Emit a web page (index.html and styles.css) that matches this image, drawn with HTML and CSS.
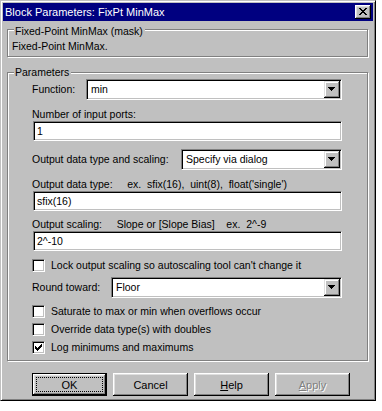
FILE: index.html
```html
<!DOCTYPE html>
<html lang="en">
<head>
    <meta charset="UTF-8">
    <title>Block Parameters: FixPt MinMax</title>
    <link rel="stylesheet" href="styles.css">
</head>
<body>
    <div class="window">
        <div class="titlebar">
            <span class="title">Block Parameters: FixPt MinMax</span>
            <span class="close-btn">
                <svg width="8" height="7" viewBox="0 0 8 7" shape-rendering="crispEdges">
                    <path fill="#000" d="M0 0h2v1h-2zM6 0h2v1h-2zM1 1h2v1h-2zM5 1h2v1h-2zM2 2h4v1h-4zM3 3h2v1h-2zM2 4h4v1h-4zM1 5h2v1h-2zM5 5h2v1h-2zM0 6h2v1h-2zM6 6h2v1h-2z"/>
                </svg>
            </span>
        </div>

        <div class="client">
            <div class="group group-mask">
                <div class="legend">Fixed-Point MinMax (mask)</div>
                <div class="desc">Fixed-Point MinMax.</div>
            </div>

            <div class="group group-params">
                <div class="legend">Parameters</div>

                <div class="row row-function">
                    <span class="label">Function:</span>
                    <div class="select sel-function">
                        <span class="value">min</span>
                        <span class="drop"><svg width="7" height="4" viewBox="0 0 7 4" shape-rendering="crispEdges"><path d="M0 0h7v1h-7zM1 1h5v1h-5zM2 2h3v1h-3zM3 3h1v1h-1z"/></svg></span>
                    </div>
                </div>

                <div class="caption cap-ports">Number of input ports:</div>
                <div class="edit">1</div>

                <div class="row row-scaling">
                    <span class="label">Output data type and scaling:</span>
                    <div class="select sel-scaling">
                        <span class="value">Specify via dialog</span>
                        <span class="drop"><svg width="7" height="4" viewBox="0 0 7 4" shape-rendering="crispEdges"><path d="M0 0h7v1h-7zM1 1h5v1h-5zM2 2h3v1h-3zM3 3h1v1h-1z"/></svg></span>
                    </div>
                </div>

                <div class="caption cap-type">Output data type:     ex.  sfix(16),  uint(8),  float('single')</div>
                <div class="edit">sfix(16)</div>

                <div class="caption cap-scale">Output scaling:     Slope or [Slope Bias]    ex.  2^-9</div>
                <div class="edit">2^-10</div>

                <label class="check check-lock">
                    <span class="box"></span>
                    <span>Lock output scaling so autoscaling tool can't change it</span>
                </label>

                <div class="row row-round">
                    <span class="label">Round toward:</span>
                    <div class="select sel-round">
                        <span class="value">Floor</span>
                        <span class="drop"><svg width="7" height="4" viewBox="0 0 7 4" shape-rendering="crispEdges"><path d="M0 0h7v1h-7zM1 1h5v1h-5zM2 2h3v1h-3zM3 3h1v1h-1z"/></svg></span>
                    </div>
                </div>

                <div class="checks">
                    <label class="check">
                        <span class="box"></span>
                        <span>Saturate to max or min when overflows occur</span>
                    </label>
                    <label class="check">
                        <span class="box"></span>
                        <span>Override data type(s) with doubles</span>
                    </label>
                    <label class="check">
                        <span class="box">
                            <svg width="7" height="7" viewBox="0 0 7 7" shape-rendering="crispEdges"><path d="M6 0h1v3h-1zM5 1h1v3h-1zM0 2h1v3h-1zM4 2h1v3h-1zM1 3h1v3h-1zM3 3h1v3h-1zM2 4h1v3h-1z"/></svg>
                        </span>
                        <span>Log minimums and maximums</span>
                    </label>
                </div>
            </div>

            <div class="buttons">
                <button class="btn btn-default"><span class="focus">OK</span></button>
                <button class="btn">Cancel</button>
                <button class="btn"><u>H</u>elp</button>
                <button class="btn btn-disabled"><u>A</u>pply</button>
            </div>
        </div>
    </div>
</body>
</html>
```

FILE: styles.css
```css
body {
    margin: 0;
    background-color: #fff;
    font-family: "Liberation Sans", Arial, sans-serif;
    font-size: 10.5px;
    line-height: 13px;
    color: #000;
}
.window {
    width: 376px;
    height: 401px;
    box-sizing: border-box;
    background-color: #c0c0c0;
    border: 1px solid;
    border-color: #c0c0c0 #000 #000 #c0c0c0;
    box-shadow: inset 1px 1px 0 #fff, inset -1px -1px 0 #808080;
    padding: 2px;
}
.titlebar {
    height: 18px;
    background-color: #000080;
    color: #fff;
    display: flex;
    align-items: center;
    justify-content: space-between;
    padding: 0 2px 0 2px;
}
.title {
    font-size: 11px;
}
.close-btn {
    width: 16px;
    height: 14px;
    box-sizing: border-box;
    background-color: #c0c0c0;
    box-shadow: inset -1px -1px 0 #000, inset 1px 1px 0 #fff, inset -2px -2px 0 #808080, inset 2px 2px 0 #dfdfdf;
    display: flex;
    align-items: center;
    justify-content: center;
    padding: 0 1px 1px 0;
}
.client {
    padding: 8px 4px 0 4px;
}
.group {
    border: 1px solid #808080;
    box-shadow: 1px 1px 0 #fff, inset 1px 1px 0 #fff;
    margin-right: 1px;
}
.legend {
    display: table;
    background-color: #c0c0c0;
    padding: 0 2px 0 1px;
    margin-left: 6px;
}
.group-mask {
    height: 28px;
    box-sizing: border-box;
}
.group-mask .legend {
    margin-top: -5px;
}
.desc {
    margin: 2px 0 0 4px;
}
.group-params {
    height: 289px;
    box-sizing: border-box;
    margin-top: 15px;
    padding: 0 25px 0 24px;
}
.group-params .legend {
    margin: -7px 0 0 -18px;
}
.row {
    display: flex;
    align-items: center;
    justify-content: space-between;
}
.select {
    height: 21px;
    box-sizing: border-box;
    background-color: #fff;
    border: 1px solid;
    border-color: #808080 #fff #fff #808080;
    box-shadow: inset 1px 1px 0 #000, inset -1px -1px 0 #c0c0c0;
    display: flex;
    align-items: center;
    padding: 1px;
}
.select .value {
    flex: 1;
    padding-left: 3px;
}
.drop {
    width: 16px;
    height: 17px;
    box-sizing: border-box;
    background-color: #c0c0c0;
    box-shadow: inset -1px -1px 0 #000, inset 1px 1px 0 #dfdfdf, inset -2px -2px 0 #808080, inset 2px 2px 0 #fff;
    display: flex;
    align-items: center;
    justify-content: center;
    padding: 0 1px 1px 0;
}
.sel-function {
    width: 256px;
}
.sel-scaling {
    width: 161px;
}
.sel-round {
    width: 231px;
}
.caption {
    white-space: pre;
    margin-top: 8px;
}
.cap-scale {
    margin-top: 7px;
}
.edit {
    height: 20px;
    box-sizing: border-box;
    background-color: #fff;
    border: 1px solid;
    border-color: #808080 #fff #fff #808080;
    box-shadow: inset 1px 1px 0 #000, inset -1px -1px 0 #c0c0c0;
    padding: 3px 3px 0 3px;
    margin-left: 1px;
}
.row-scaling {
    margin-top: 8px;
}
.check {
    display: flex;
    align-items: center;
    gap: 6px;
    height: 18px;
}
.check-lock {
    margin-top: 5px;
}
.box {
    width: 13px;
    height: 13px;
    box-sizing: border-box;
    background-color: #fff;
    border: 1px solid;
    border-color: #808080 #fff #fff #808080;
    box-shadow: inset 1px 1px 0 #000, inset -1px -1px 0 #c0c0c0;
    display: flex;
    align-items: center;
    justify-content: center;
}
.row-round {
    margin-top: 3px;
}
.checks {
    margin-top: 4px;
}
.buttons {
    display: flex;
    gap: 6px;
    margin-top: 12px;
    padding-left: 25px;
}
.btn {
    width: 75px;
    height: 23px;
    box-sizing: border-box;
    background-color: #c0c0c0;
    border: none;
    box-shadow: inset -1px -1px 0 #000, inset 1px 1px 0 #fff, inset -2px -2px 0 #808080, inset 2px 2px 0 #dfdfdf;
    font-family: inherit;
    font-size: 11px;
    color: #000;
    padding: 0;
}
.btn u {
    text-decoration: underline;
}
.btn-default {
    border: 1px solid #000;
    padding: 3px;
    display: flex;
}
.focus {
    flex: 1;
    border: 1px dotted #000;
    display: flex;
    align-items: center;
    justify-content: center;
}
.btn-disabled {
    color: #808080;
    text-shadow: 1px 1px 0 #fff;
}
```
